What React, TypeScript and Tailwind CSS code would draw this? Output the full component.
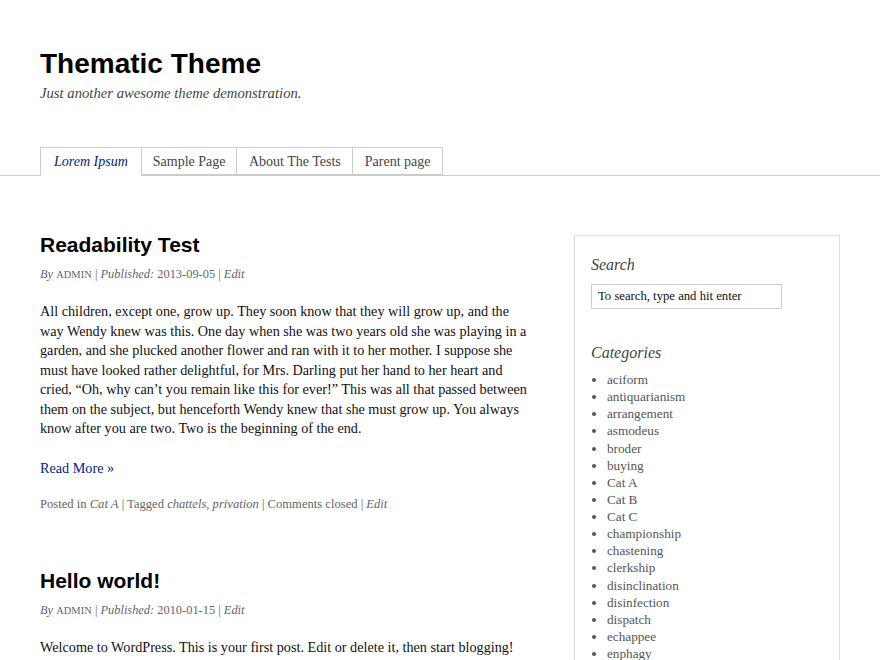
import React from "react";

const serif = { fontFamily: '"Liberation Serif", "DejaVu Serif", serif' };
const sans = { fontFamily: '"Liberation Sans", Arial, sans-serif' };

const cats = [
  "aciform","antiquarianism","arrangement","asmodeus","broder","buying","Cat A","Cat B","Cat C",
  "championship","chastening","clerkship","disinclination","disinfection","dispatch","echappee","enphagy",
];

function Meta({ date }: { date: string }) {
  return (
    <div className="text-[12.4px] text-[#666] leading-[18px]" style={serif}>
      <span className="italic">By</span> <span className="uppercase text-[10.5px]">admin</span>{" "}
      <span>|</span> <span className="italic">Published:</span> {date}{" "}
      <span>|</span> <span className="italic">Edit</span>
    </div>
  );
}

export default function App() {
  return (
    <div className="w-[880px] h-[660px] overflow-hidden bg-white text-black" style={serif}>
      <header className="px-[40px] pt-[48px]">
        <h1 className="text-[28px] font-bold leading-[32px] text-black" style={sans}>Thematic Theme</h1>
        <p className="mt-[3px] text-[14.7px] italic text-[#444] leading-[20px]">Just another awesome theme demonstration.</p>
      </header>
      <nav className="mt-[44px] border-b border-[#ccc] px-[40px]">
        <ul className="flex h-[28px] items-stretch text-[14px]">
          <li className="-mb-px flex items-center border border-b-white border-[#ccc] bg-white px-[13px] italic text-[#00238a]">Lorem Ipsum</li>
          <li className="flex items-center border-y border-r border-[#ccc] px-[11px] text-[#444]">Sample Page</li>
          <li className="flex items-center border-y border-r border-[#ccc] px-[11.5px] text-[#444]">About The Tests</li>
          <li className="flex items-center border-y border-r border-[#ccc] px-[11.5px] text-[#444]">Parent page</li>
        </ul>
      </nav>
      <main className="flex px-[40px] pt-[56px]">
        <div className="w-[494px]">
          <article>
            <h2 className="text-[21px] font-bold leading-[26px] text-black" style={sans}>Readability Test</h2>
            <div className="mt-[7px]"><Meta date="2013-09-05" /></div>
            <p className="mt-[18px] text-[14.2px] leading-[19.5px] text-[#111]">
              All children, except one, grow up. They soon know that they will grow up, and the way Wendy knew was this. One day when she was two years old she was playing in a garden, and she plucked another flower and ran with it to her mother. I suppose she must have looked rather delightful, for Mrs. Darling put her hand to her heart and cried, “Oh, why can’t you remain like this for ever!” This was all that passed between them on the subject, but henceforth Wendy knew that she must grow up. You always know after you are two. Two is the beginning of the end.
            </p>
            <p className="mt-[20px] text-[14.2px] leading-[19.5px] text-[#00238a]">Read More »</p>
            <div className="mt-[17px] text-[12.6px] leading-[18px] text-[#666]">
              Posted in <span className="italic">Cat A</span> | Tagged{" "}
              <span className="italic">chattels</span>, <span className="italic">privation</span>{" "}
              | Comments closed |{" "}
              <span className="italic">Edit</span>
            </div>
          </article>
          <article className="mt-[55px]">
            <h2 className="text-[21px] font-bold leading-[26px] text-black" style={sans}>Hello world!</h2>
            <div className="mt-[7px]"><Meta date="2010-01-15" /></div>
            <p className="mt-[18px] text-[14.2px] leading-[19.5px] text-[#111]">
              Welcome to WordPress. This is your first post. Edit or delete it, then start blogging!
            </p>
          </article>
        </div>
        <aside className="ml-auto mt-[3px] w-[266px] border border-[#ddd] px-[16px] pt-[18px] pb-[20px] h-[600px]">
          <h3 className="text-[16px] italic leading-[22px] text-[#444]">Search</h3>
          <div className="mt-[8px] flex h-[25px] w-[191px] items-center border border-[#ccc] px-[6px] text-[12.7px] text-[#111]">
            To search, type and hit enter
          </div>
          <h3 className="mt-[33px] text-[16px] italic leading-[22px] text-[#444]">Categories</h3>
          <ul className="mt-[7px] list-disc pl-[16px] text-[13.2px] leading-[17.125px] text-[#555] marker:text-[#555]">
            {cats.map((c) => (
              <li key={c}>{c}</li>
            ))}
          </ul>
        </aside>
      </main>
    </div>
  );
}
